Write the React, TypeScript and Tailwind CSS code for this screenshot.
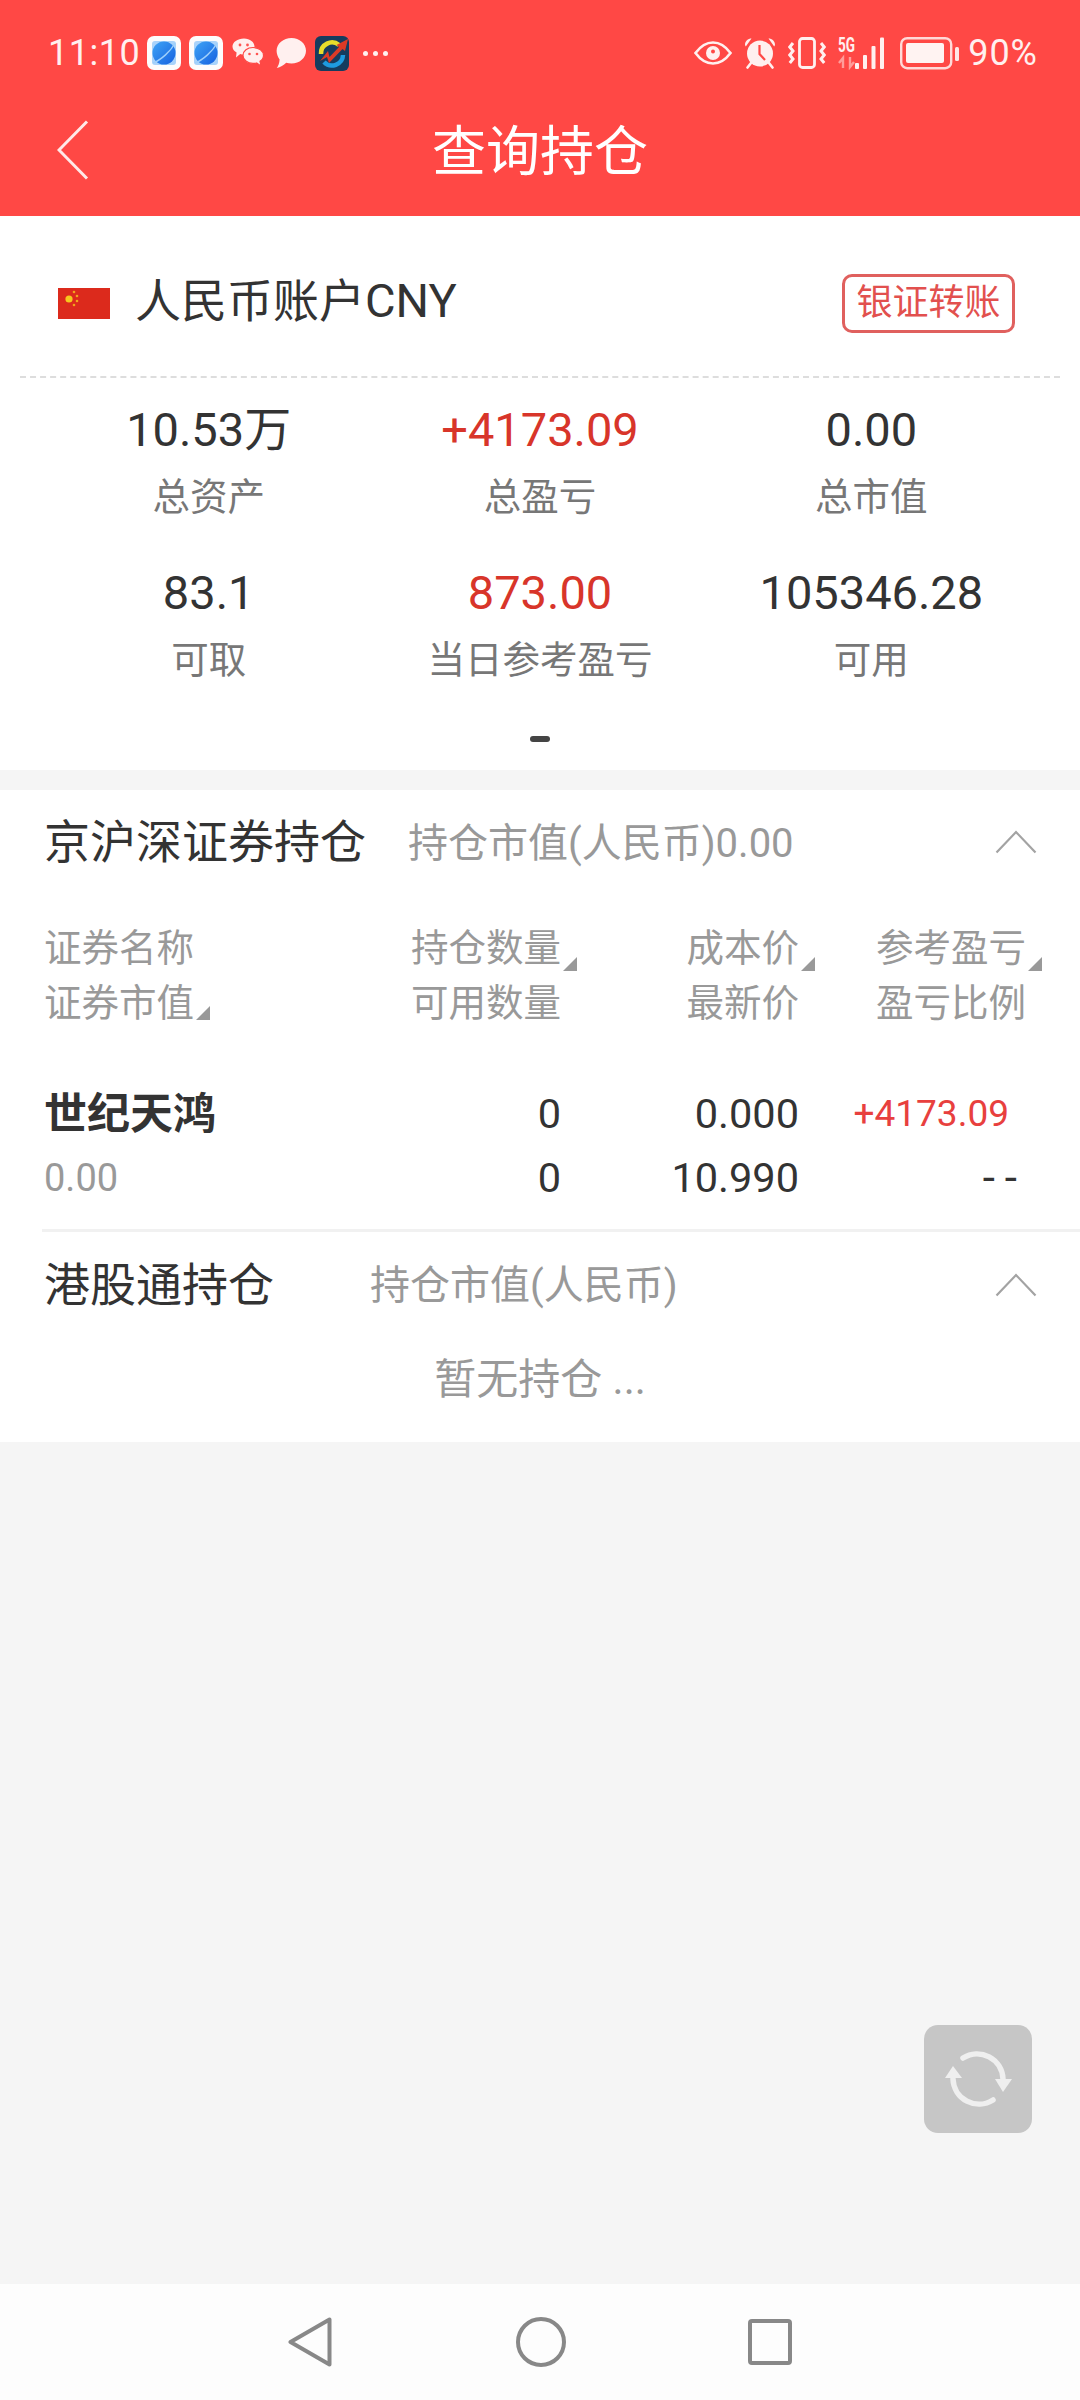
const AppPlanetIcon = ({ id }: { id: string }) => (
  <svg width="34" height="34" viewBox="0 0 34 34">
    <defs>
      <linearGradient id={id} x1="0" y1="0" x2="1" y2="1">
        <stop offset="0" stopColor="#3fa4f5" />
        <stop offset="1" stopColor="#1560e0" />
      </linearGradient>
    </defs>
    <rect width="34" height="34" rx="7" fill="#fdfcfc" />
    <rect x="5" y="5" width="24" height="24" rx="3" fill="#a9d3fa" />
    <circle cx="17" cy="17" r="11.5" fill={`url(#${id})`} />
    <path d="M6 27 C14 24 24 15 28 7" stroke="#9fd0fb" strokeWidth="1.4" fill="none" />
  </svg>
);

const WechatIcon = () => (
  <svg width="32" height="30" viewBox="0 0 32 30">
    <path d="M12 0.5 C18 0.5 22.5 4.2 22.5 8.6 C22.5 13 18 16.6 12 16.6 C10.6 16.6 9.4 16.4 8.2 16 L4 19.5 L4.6 14.6 C2 13.2 0.5 11 0.5 8.6 C0.5 4.2 5.5 0.5 12 0.5 Z" fill="#fff0ef" />
    <circle cx="8" cy="7" r="1.4" fill="#ff5552" />
    <circle cx="15.5" cy="7" r="1.4" fill="#ff5552" />
    <path d="M21 9.5 C27 9.5 31.5 13 31.5 17.4 C31.5 19.8 30.2 21.8 28 23.2 L29 28 L24.6 25 C23.4 25.3 22.2 25.4 21 25.4 C15.4 25.4 11 21.8 11 17.4 C11 13 15.4 9.5 21 9.5 Z" fill="#fff0ef" stroke="#ff4845" strokeWidth="1.2" />
    <circle cx="17.5" cy="16" r="1.3" fill="#ff5552" />
    <circle cx="25" cy="16" r="1.3" fill="#ff5552" />
  </svg>
);

const ChatIcon = () => (
  <svg width="32" height="32" viewBox="0 0 32 32">
    <path d="M16.5 1 C24.5 1 31 6.6 31 13.8 C31 21 24.5 26.6 16.5 26.6 C14.6 26.6 12.8 26.3 11.2 25.8 C8.6 28.4 5.4 30.4 1.8 31 C3.4 28.6 4.4 26 4.6 22.4 C2.8 20 1.6 17 1.6 13.8 C1.6 6.6 8.4 1 16.5 1 Z" fill="#fff0ef" />
  </svg>
);

const StockAppIcon = () => (
  <svg width="34" height="35" viewBox="0 0 34 35">
    <rect width="34" height="35" rx="6" fill="#163c5e" />
    <path d="M6 18 A11 11 0 0 1 24 9" stroke="#e7dc2b" strokeWidth="4.5" fill="none" />
    <path d="M28 19 A11 11 0 0 1 9 26" stroke="#1e9be0" strokeWidth="4.5" fill="none" />
    <path d="M5 25 L13 15 L14.5 21 L24 11 L21.5 9 L33 3 L30 15 L27.5 13 L14 27 L12 21 Z" fill="#dc3a26" />
  </svg>
);

const EyeIcon = () => (
  <svg width="38" height="24" viewBox="0 0 38 24">
    <path d="M1.5 12 C7 4.5 13 1.5 19 1.5 C25 1.5 31 4.5 36.5 12 C31 19.5 25 22.5 19 22.5 C13 22.5 7 19.5 1.5 12 Z" fill="none" stroke="#fff0ef" strokeWidth="2.6" />
    <circle cx="19" cy="12" r="7" fill="#fff0ef" />
    <circle cx="19" cy="10.5" r="2" fill="#ff4845" />
  </svg>
);

const AlarmIcon = () => (
  <svg width="32" height="32" viewBox="0 0 32 32">
    <path d="M1 8 C1 4 4 1.5 7.5 1.5 L1.8 9.5 Z M31 8 C31 4 28 1.5 24.5 1.5 L30.2 9.5 Z" fill="#fff0ef" />
    <circle cx="16" cy="16.5" r="13" fill="#fff0ef" />
    <path d="M15.5 8 V17 L21 23" fill="none" stroke="#ff4845" strokeWidth="2.2" />
    <path d="M7 26 L3.5 30.5 M25 26 L28.5 30.5" stroke="#fff0ef" strokeWidth="2.6" strokeLinecap="round" />
  </svg>
);

const VibrateIcon = () => (
  <svg width="38" height="32" viewBox="0 0 38 32">
    <rect x="11.5" y="1.5" width="15" height="29" rx="3" fill="none" stroke="#fff0ef" strokeWidth="2.8" />
    <path d="M5 6 L1.8 10 L5 14 L1.8 18 L5 22 L1.8 26 M33 6 L36.2 10 L33 14 L36.2 18 L33 22 L36.2 26" fill="none" stroke="#fff0ef" strokeWidth="3" />
  </svg>
);

const SignalIcon = () => (
  <svg className="-mt-[4px]" width="50" height="37" viewBox="0 -4 50 37">
    <text x="0" y="15" fontSize="20" fontWeight="700" fontFamily="'Roboto', sans-serif" fill="#fff0ef" textLength="17" lengthAdjust="spacingAndGlyphs">
      5G
    </text>
    <path d="M5 31 V21 L1 26 M12 20 V30 L16 25" fill="none" stroke="#ff9d9a" strokeWidth="2.4" />
    <rect x="17" y="26" width="4" height="6" rx="1" fill="#fff0ef" />
    <rect x="25" y="18" width="4" height="14" rx="1" fill="#fff0ef" />
    <rect x="33.5" y="9" width="4" height="23" rx="1" fill="#fff0ef" />
    <rect x="42" y="0.5" width="4" height="31.5" rx="1" fill="#fff0ef" />
  </svg>
);

const BatteryIcon = () => (
  <svg width="60" height="33" viewBox="0 0 60 33">
    <rect x="1.2" y="1.2" width="50" height="30" rx="6" fill="none" stroke="#ffd9d8" strokeWidth="2.4" />
    <rect x="6" y="6" width="38" height="20" rx="2" fill="#fff3f2" />
    <rect x="55" y="10" width="4" height="14" rx="1.5" fill="#ffe6e5" />
  </svg>
);

const ChevronUp = () => (
  <svg width="42" height="24" viewBox="0 0 42 24">
    <path d="M1.5 22.5 L21 2 L40.5 22.5" fill="none" stroke="#a3a3a3" strokeWidth="2.2" />
  </svg>
);

const SortMark = () => (
  <svg className="absolute right-[-16px] bottom-[5px]" width="14" height="14" viewBox="0 0 14 14">
    <path d="M14 0 V14 H0 Z" fill="#999999" />
  </svg>
);

const stats = [
  { value: '10.53万', label: '总资产' },
  { value: '+4173.09', label: '总盈亏', red: true },
  { value: '0.00', label: '总市值' },
  { value: '83.1', label: '可取' },
  { value: '873.00', label: '当日参考盈亏', red: true },
  { value: '105346.28', label: '可用' },
];

const tableGrid = 'grid grid-cols-[349px_168px_238px_227px] pl-[44px] whitespace-nowrap';

export default function App() {
  return (
    <div className="flex min-h-[2400px] w-[1080px] flex-col bg-[#f5f5f5] font-['Roboto','Noto_Sans_CJK_SC',sans-serif] text-[#333333]">
      <header className="h-[216px] bg-[#ff4845] pt-[36px] text-white">
        <div className="flex h-[34px] items-center justify-between pl-[48px] pr-[42px]">
          <div className="flex items-center">
            <span className="w-[99px] text-[36px] leading-[34px] tracking-[0.5px] text-[#fff0ef]">11:10</span>
            <div className="flex items-center gap-[8px]">
              <AppPlanetIcon id="planet-a" />
              <AppPlanetIcon id="planet-b" />
            </div>
            <div className="ml-[9px]">
              <WechatIcon />
            </div>
            <div className="ml-[11px]">
              <ChatIcon />
            </div>
            <div className="ml-[8px]">
              <StockAppIcon />
            </div>
            <div className="ml-[14px] flex gap-[5px]">
              <span className="size-[5px] rounded-full bg-[#fff0ef]" />
              <span className="size-[5px] rounded-full bg-[#fff0ef]" />
              <span className="size-[5px] rounded-full bg-[#fff0ef]" />
            </div>
          </div>
          <div className="flex items-center">
            <EyeIcon />
            <div className="ml-[12px]">
              <AlarmIcon />
            </div>
            <div className="ml-[12px]">
              <VibrateIcon />
            </div>
            <div className="ml-[12px]">
              <SignalIcon />
            </div>
            <div className="ml-[12px]">
              <BatteryIcon />
            </div>
            <span className="ml-[8px] text-[36px] leading-[34px] tracking-[1px] text-[#fff0ef]">90%</span>
          </div>
        </div>
        <div className="mt-[14px] grid h-[132px] grid-cols-[1fr_auto_1fr] items-center">
          <div className="pl-[57px]">
            <svg width="32" height="60" viewBox="0 0 32 60">
              <path d="M30 1.5 L2 30 L30 58.5" fill="none" stroke="#ffe9e8" strokeWidth="3" />
            </svg>
          </div>
          <h1 className="pt-[5px] text-[54px] font-normal leading-none">查询持仓</h1>
          <div />
        </div>
      </header>

      <section className="bg-white">
        <div className="flex h-[160px] items-center justify-between pl-[58px] pr-[65px] pt-[14px]">
          <div className="flex items-center">
            <svg width="52" height="31" viewBox="0 0 52 31">
              <rect width="52" height="31" fill="#dc2a1c" />
              <circle cx="11" cy="11" r="3.6" fill="#f7c81e" />
              <circle cx="16" cy="4" r="1.3" fill="#f2a51c" />
              <circle cx="19" cy="8" r="1.3" fill="#f2a51c" />
              <circle cx="19" cy="13" r="1.3" fill="#f2a51c" />
              <circle cx="16" cy="17" r="1.3" fill="#f2a51c" />
            </svg>
            <span className="mb-[6px] ml-[25px] text-[46px] leading-none">
              人民币账户<span className="text-[47px]">CNY</span>
            </span>
          </div>
          <button className="flex h-[59px] w-[173px] items-center justify-center rounded-[10px] border-[3px] border-[#e0605e] text-[36px] leading-none text-[#e2504e]">
            银证转账
          </button>
        </div>
        <div className="mx-[20px] border-t-2 border-dashed border-[#dddddd]" />
        <div className="grid grid-cols-3 gap-y-[29px] px-[43px] pt-[20px]">
          {stats.map(stat => (
            <div key={stat.label} className="flex flex-col items-center">
              <span className={`text-[47px] leading-[64px] ${stat.red ? 'text-[#d8352a]' : 'text-[#333333]'}`}>
                {stat.value}
              </span>
              <span className="text-[37.5px] leading-[70px] text-[#777777]">{stat.label}</span>
            </div>
          ))}
        </div>
        <div className="flex justify-center pb-[28px] pt-[41px]">
          <span className="h-[6px] w-[20px] rounded-full bg-[#444444]" />
        </div>
      </section>

      <section className="mt-[20px] bg-white">
        <div className="flex h-[104px] items-center pl-[44px] pr-[43px]">
          <span className="w-[364px] text-[46px] leading-none">京沪深证券持仓</span>
          <span className="pt-[3px] text-[40px] leading-none text-[#999999]">持仓市值(人民币)0.00</span>
          <div className="ml-auto">
            <ChevronUp />
          </div>
        </div>
        <div className={`${tableGrid} pt-[27px] text-[37.5px] leading-[55px] text-[#999999]`}>
          <span>证券名称</span>
          <span className="relative text-right">
            持仓数量
            <SortMark />
          </span>
          <span className="relative text-right">
            成本价
            <SortMark />
          </span>
          <span className="relative text-right">
            参考盈亏
            <SortMark />
          </span>
          <span>
            <span className="relative">
              证券市值
              <SortMark />
            </span>
          </span>
          <span className="text-right">可用数量</span>
          <span className="text-right">最新价</span>
          <span className="text-right">盈亏比例</span>
        </div>
        <div className={`${tableGrid} mt-[51px] text-[41.5px] leading-[64px]`}>
          <span className="text-[43px] font-bold">世纪天鸿</span>
          <span className="text-right">0</span>
          <span className="text-right">0.000</span>
          <span className="pr-[17px] text-right text-[37px] text-[#e8403e]">+4173.09</span>
          <span className="text-[38px] text-[#999999]">0.00</span>
          <span className="text-right">0</span>
          <span className="text-right">10.990</span>
          <span className="-mr-[1px] text-right text-[44px] tracking-[10px]">--</span>
        </div>
        <div className="ml-[42px] mt-[19px] h-[3px] bg-[#f1f1f1]" />
        <div className="flex h-[106px] items-center pl-[44px] pr-[43px]">
          <span className="w-[326px] text-[46px] leading-none">港股通持仓</span>
          <span className="pt-[2px] text-[40px] leading-none text-[#999999]">持仓市值(人民币)</span>
          <div className="ml-auto">
            <ChevronUp />
          </div>
        </div>
        <p className="pb-[23px] pt-[3px] text-center text-[42px] leading-[78px] text-[#999999]">暂无持仓 ...</p>
      </section>

      <main className="relative flex-1">
        <button className="absolute bottom-[151px] right-[48px] flex size-[108px] items-center justify-center rounded-[14px] bg-[#c6c6c6]">
          <svg width="108" height="108" viewBox="-54 -54 108 108">
            <path d="M-15 -21 A26 26 0 0 1 25 0" fill="none" stroke="#efefef" strokeWidth="5.5" strokeLinecap="round" />
            <path d="M17 0 H34 L25 13 Z" fill="#efefef" />
            <path d="M15 21 A26 26 0 0 1 -25 0" fill="none" stroke="#efefef" strokeWidth="5.5" strokeLinecap="round" />
            <path d="M-33 -1 H-16 L-25 -13 Z" fill="#efefef" />
          </svg>
        </button>
      </main>

      <nav className="flex h-[116px] items-center justify-center gap-[184px] bg-[#fdfdfd]">
        <svg width="44" height="50" viewBox="0 0 44 50">
          <path d="M41.5 2.5 V47.5 L2.5 25 Z" fill="none" stroke="#888888" strokeWidth="4" strokeLinejoin="round" />
        </svg>
        <svg width="50" height="50" viewBox="0 0 50 50">
          <circle cx="25" cy="25" r="23" fill="none" stroke="#888888" strokeWidth="4" />
        </svg>
        <svg className="-ml-[2px]" width="44" height="46" viewBox="0 0 44 46">
          <rect x="2" y="2" width="40" height="42" rx="2" fill="none" stroke="#888888" strokeWidth="4" />
        </svg>
      </nav>
    </div>
  );
}
